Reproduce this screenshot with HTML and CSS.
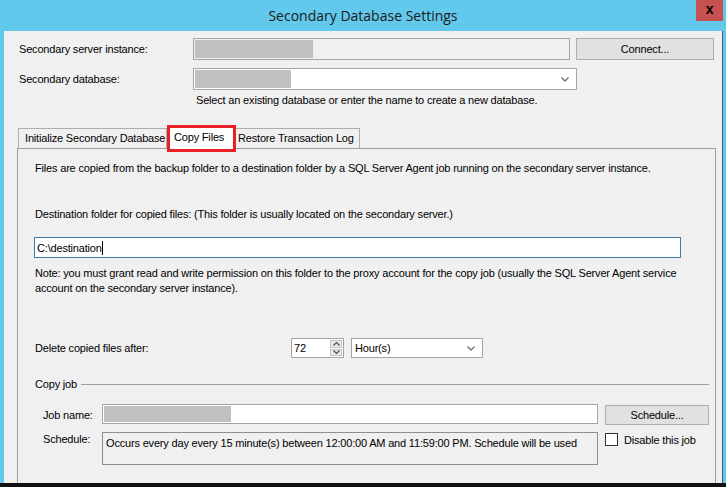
FILE: index.html
```html
<!DOCTYPE html>
<html lang="en">
<head>
    <meta charset="UTF-8">
    <title>Secondary Database Settings</title>
    <link rel="stylesheet" href="styles.css">
</head>
<body>
    <div class="window">
        <div class="titlebar">
            <div></div>
            <div class="title">Secondary Database Settings</div>
            <div class="close">x</div>
        </div>
        <div class="client">
            <div class="row">
                <div class="label">Secondary server instance:</div>
                <div class="field readonly server"><span class="blur" style="width:118px"></span></div>
                <div class="button connect">Connect...</div>
            </div>
            <div class="row second">
                <div class="label">Secondary database:</div>
                <div class="field combo database">
                    <span class="blur" style="width:96px"></span>
                    <svg class="chevron" width="8" height="5" viewBox="0 0 8 5"><path d="M0.5 0.5 L4 4 L7.5 0.5" fill="none" stroke="#707070" stroke-width="1.3"/></svg>
                </div>
            </div>
            <div class="hint">Select an existing database or enter the name to create a new database.</div>

            <div class="tabs">
                <div class="tab">Initialize Secondary Database</div>
                <div class="tab selected">Copy Files</div>
                <div class="tab">Restore Transaction Log</div>
            </div>
            <div class="panel">
                <div class="text intro">Files are copied from the backup folder to a destination folder by a SQL Server Agent job running on the secondary server instance.</div>
                <div class="text dest">Destination folder for copied files: (This folder is usually located on the secondary server.)</div>
                <div class="field focus path"><span class="caret">C:\destination</span></div>
                <div class="text note">Note: you must grant read and write permission on this folder to the proxy account for the copy job (usually the SQL Server Agent service<br>account on the secondary server instance).</div>

                <div class="delete-row">
                    <div class="label">Delete copied files after:</div>
                    <div class="spinner">
                        <div class="spin-value">72</div>
                        <div class="spin-buttons">
                            <div class="spin-btn"><svg width="7" height="4" viewBox="0 0 7 4"><path d="M0.5 3.5 L3.5 0.5 L6.5 3.5" fill="none" stroke="#505050" stroke-width="1.2"/></svg></div>
                            <div class="spin-btn"><svg width="7" height="4" viewBox="0 0 7 4"><path d="M0.5 0.5 L3.5 3.5 L6.5 0.5" fill="none" stroke="#505050" stroke-width="1.2"/></svg></div>
                        </div>
                    </div>
                    <div class="field combo unit">
                        <span class="unit-text">Hour(s)</span>
                        <svg class="chevron" width="8" height="5" viewBox="0 0 8 5"><path d="M0.5 0.5 L4 4 L7.5 0.5" fill="none" stroke="#707070" stroke-width="1.3"/></svg>
                    </div>
                </div>

                <div class="group-title">Copy job</div>

                <div class="job-row">
                    <div class="label">Job name:</div>
                    <div class="field jobname"><span class="blur" style="width:127px"></span></div>
                    <div class="button schedule-btn">Schedule...</div>
                </div>
                <div class="job-row schedule-row">
                    <div class="label">Schedule:</div>
                    <div class="field readonly schedule-text">Occurs every day every 15 minute(s) between 12:00:00 AM and 11:59:00 PM. Schedule will be used</div>
                    <div class="check">
                        <span class="box"></span>
                        <span>Disable this job</span>
                    </div>
                </div>
            </div>
        </div>
    </div>
</body>
</html>
```

FILE: styles.css
```css
body {
    margin: 0;
    font-family: "Liberation Sans", Arial, sans-serif;
    font-size: 11px;
    letter-spacing: -0.18px;
    color: #000;
}
.window {
    width: 726px;
    height: 487px;
    box-sizing: border-box;
    background-color: #62c8ec;
    border-bottom: 4px solid #111;
    display: flex;
    flex-direction: column;
    overflow: hidden;
}
.titlebar {
    height: 31px;
    flex: none;
    display: grid;
    grid-template-columns: 1fr auto 1fr;
}
.title {
    font-family: "Open Sans", sans-serif;
    font-size: 14px;
    letter-spacing: 0;
    line-height: 32px;
    color: #1a1a1a;
}
.close {
    justify-self: end;
    width: 27px;
    height: 21px;
    margin-right: 3px;
    background-color: #c75050;
    color: #000;
    font-weight: bold;
    font-size: 14px;
    line-height: 19px;
    text-align: center;
}
.client {
    flex: 1;
    margin: 0 3px 0 4px;
    border-right: 1px solid #4a5a60;
    background-color: #f0f0f0;
    padding: 7px 0 0 15px;
    display: flex;
    flex-direction: column;
    min-height: 0;
}
.row {
    display: grid;
    grid-template-columns: 168px 377px 138px;
    column-gap: 6px;
    height: 22px;
    align-items: center;
    white-space: nowrap;
}
.row.second {
    grid-template-columns: 168px 384px;
    margin-top: 8px;
}
.field {
    box-sizing: border-box;
    border: 1px solid #a5a5a5;
    background-color: #fff;
    height: 100%;
    display: flex;
    align-items: center;
    position: relative;
    padding: 1px;
}
.field.readonly {
    background-color: #f0f0f0;
}
.blur {
    display: block;
    height: 100%;
    background-color: #c0c0c0;
}
.combo .chevron {
    margin-left: auto;
    margin-right: 6px;
}
.button {
    box-sizing: border-box;
    height: 100%;
    border: 1px solid #adadad;
    background-color: #e1e1e1;
    display: flex;
    align-items: center;
    justify-content: center;
}
.hint {
    margin: 3px 0 0 177px;
    line-height: 15px;
}
.tabs {
    margin: 17px 0 0 -1px;
    height: 23px;
    display: flex;
    align-items: flex-end;
    flex: none;
    white-space: nowrap;
}
.tab {
    box-sizing: border-box;
    height: 20px;
    border: 1px solid #adadad;
    border-bottom: none;
    padding: 0 6px;
    line-height: 19px;
    background-color: #f0f0f0;
}
.tab:first-child {
    width: 149px;
}
.tab:last-child {
    width: 124px;
    border-left: none;
    padding-left: 2px;
}
.tab.selected {
    position: relative;
    z-index: 1;
    width: 69px;
    height: 27px;
    margin-bottom: -4px;
    border: 3px solid #e8202a;
    background-color: #fff;
    padding: 0 4px;
    line-height: 19px;
}
.panel {
    flex: 1;
    width: 699px;
    margin-left: -2px;
    box-sizing: border-box;
    border: 1px solid #a0a0a0;
    border-bottom: none;
    padding: 0 0 0 17px;
}
.text {
    line-height: 15px;
}
.intro {
    margin-top: 12px;
}
.dest {
    margin-top: 31px;
}
.path {
    margin: 15px 0 0 -1px;
    width: 647px;
    height: 21px;
    border-color: #3d7bad;
    padding-left: 2px;
}
.caret {
    border-right: 1px solid #000;
    line-height: 14px;
}
.note {
    margin-top: 8px;
}
.delete-row {
    margin-top: 42px;
    height: 20px;
    display: flex;
    align-items: center;
}
.delete-row .label {
    width: 256px;
}
.spinner {
    display: flex;
    height: 20px;
    width: 53px;
    box-sizing: border-box;
    border: 1px solid #a5a5a5;
    background-color: #fff;
}
.spin-value {
    width: 35px;
    padding-left: 2px;
    line-height: 18px;
}
.spin-buttons {
    flex: 1;
    display: flex;
    flex-direction: column;
    gap: 1px;
    padding: 1px;
}
.spin-btn {
    flex: 1;
    background-color: #e8e8e8;
    border: 1px solid #c4c4c4;
    display: flex;
    align-items: center;
    justify-content: center;
}
.unit {
    width: 132px;
    height: 20px;
    margin-left: 7px;
    padding-left: 3px;
}
.group-title {
    margin: 19px 0 0;
    line-height: 15px;
    display: flex;
    align-items: center;
    width: 674px;
}
.group-title::after {
    content: "";
    flex: 1;
    margin-left: 4px;
    border-top: 1px solid #a0a0a0;
}
.job-row {
    margin-top: 12px;
    display: grid;
    grid-template-columns: 52px 496px auto;
    column-gap: 7px;
    height: 21px;
    padding-left: 8px;
    align-items: center;
    white-space: nowrap;
}
.jobname {
    height: 20px;
    align-self: start;
}
.schedule-btn {
    width: 104px;
    height: 20px;
    align-self: end;
}
.schedule-row {
    margin-top: 7px;
    height: 33px;
    align-items: start;
}
.schedule-row .label {
    margin-top: 1px;
}
.schedule-text {
    height: 33px;
    align-items: flex-start;
    padding: 4px 3px;
    border-color: #8f8f8f;
}
.check {
    display: flex;
    align-items: center;
    gap: 6px;
    margin-top: 1px;
}
.box {
    width: 11px;
    height: 11px;
    border: 1px solid #333;
    background-color: #fff;
}
```
